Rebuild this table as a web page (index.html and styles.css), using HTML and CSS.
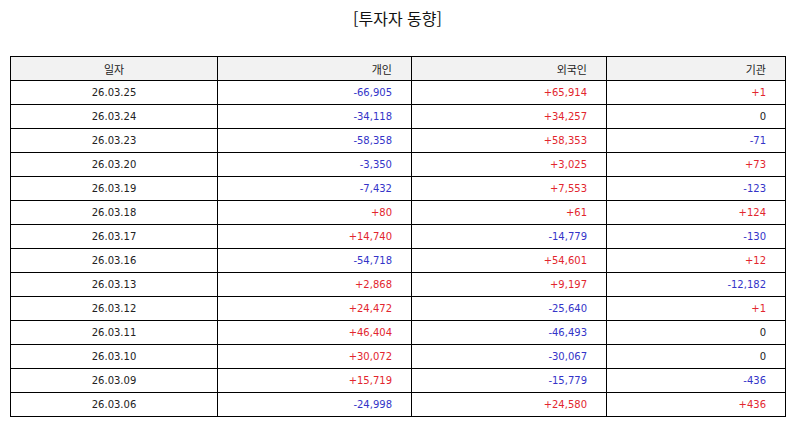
FILE: index.html
```html
<!DOCTYPE html>
<html lang="ko">
<head>
<meta charset="utf-8">
<title>투자자 동향</title>
<link rel="stylesheet" href="styles.css">
</head>
<body>
<div class="page">
  <h1 class="title">[투자자 동향]</h1>
  <table class="grid">
    <colgroup>
      <col class="c1"><col class="c2"><col class="c3"><col class="c4">
    </colgroup>
    <thead>
      <tr><th class="center">일자</th><th>개인</th><th>외국인</th><th>기관</th></tr>
    </thead>
    <tbody>
      <tr><td class="center">26.03.25</td><td class="down">-66,905</td><td class="up">+65,914</td><td class="up">+1</td></tr>
      <tr><td class="center">26.03.24</td><td class="down">-34,118</td><td class="up">+34,257</td><td>0</td></tr>
      <tr><td class="center">26.03.23</td><td class="down">-58,358</td><td class="up">+58,353</td><td class="down">-71</td></tr>
      <tr><td class="center">26.03.20</td><td class="down">-3,350</td><td class="up">+3,025</td><td class="up">+73</td></tr>
      <tr><td class="center">26.03.19</td><td class="down">-7,432</td><td class="up">+7,553</td><td class="down">-123</td></tr>
      <tr><td class="center">26.03.18</td><td class="up">+80</td><td class="up">+61</td><td class="up">+124</td></tr>
      <tr><td class="center">26.03.17</td><td class="up">+14,740</td><td class="down">-14,779</td><td class="down">-130</td></tr>
      <tr><td class="center">26.03.16</td><td class="down">-54,718</td><td class="up">+54,601</td><td class="up">+12</td></tr>
      <tr><td class="center">26.03.13</td><td class="up">+2,868</td><td class="up">+9,197</td><td class="down">-12,182</td></tr>
      <tr><td class="center">26.03.12</td><td class="up">+24,472</td><td class="down">-25,640</td><td class="up">+1</td></tr>
      <tr><td class="center">26.03.11</td><td class="up">+46,404</td><td class="down">-46,493</td><td>0</td></tr>
      <tr><td class="center">26.03.10</td><td class="up">+30,072</td><td class="down">-30,067</td><td>0</td></tr>
      <tr><td class="center">26.03.09</td><td class="up">+15,719</td><td class="down">-15,779</td><td class="down">-436</td></tr>
      <tr><td class="center">26.03.06</td><td class="down">-24,998</td><td class="up">+24,580</td><td class="up">+436</td></tr>
    </tbody>
  </table>
</div>
</body>
</html>
```
FILE: styles.css
```css
html, body {
  margin: 0;
  padding: 0;
  background: #ffffff;
}

.page {
  padding: 0 9px 0 10px;
  font-family: "Noto Sans CJK KR", "Noto Sans", "DejaVu Sans", sans-serif;
  color: #222222;
}

.title {
  margin: 0;
  height: 56px;
  padding-top: 5px;
  box-sizing: border-box;
  text-align: center;
  font-size: 16px;
  font-weight: normal;
  line-height: 26px;
  color: #111111;
}

.grid {
  width: 775px;
  border-collapse: collapse;
  table-layout: fixed;
  font-family: "DejaVu Sans", "Noto Sans CJK KR", sans-serif;
  font-size: 10px;
}

.c1 { width: 207px; }
.c2 { width: 194px; }
.c3 { width: 195px; }
.c4 { width: 179px; }

.grid th,
.grid td {
  border: 1px solid #000000;
  height: 23px;
  padding: 0 19px 0 4px;
  text-align: right;
  font-weight: normal;
  line-height: 14px;
}

.grid th {
  background: #f2f2f2;
  color: #222222;
  font-family: "Noto Sans CJK KR", sans-serif;
  font-size: 11px;
}

.grid td.center,
.grid th.center {
  text-align: center;
  padding: 0 4px;
}

.up { color: #e2262e; }
.down { color: #3434c8; }
```
